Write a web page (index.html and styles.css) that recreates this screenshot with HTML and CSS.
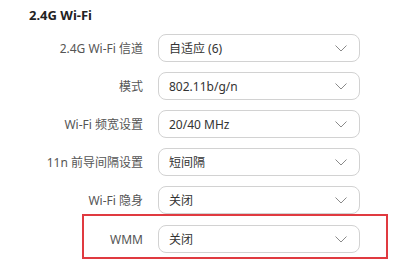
FILE: index.html
```html
<!DOCTYPE html>
<html>
    <head>
        <meta charset="utf-8">
        <title>2.4G Wi-Fi</title>
        <link rel="stylesheet" href="styles.css">
    </head>
    <body>
        <div class="panel">
            <div class="panel-title">2.4G Wi-Fi</div>

            <div class="row">
                <label class="row-label">2.4G Wi-Fi 信道</label>
                <div class="select"><span class="select-value">自适应 (6)</span><svg class="chevron" width="12" height="7" viewBox="0 0 12 7"><polyline points="0.5,0.5 6,6 11.5,0.5"/></svg></div>
            </div>
            <div class="row">
                <label class="row-label">模式</label>
                <div class="select"><span class="select-value">802.11b/g/n</span><svg class="chevron" width="12" height="7" viewBox="0 0 12 7"><polyline points="0.5,0.5 6,6 11.5,0.5"/></svg></div>
            </div>
            <div class="row">
                <label class="row-label">Wi-Fi 频宽设置</label>
                <div class="select"><span class="select-value">20/40 MHz</span><svg class="chevron" width="12" height="7" viewBox="0 0 12 7"><polyline points="0.5,0.5 6,6 11.5,0.5"/></svg></div>
            </div>
            <div class="row">
                <label class="row-label">11n 前导间隔设置</label>
                <div class="select"><span class="select-value">短间隔</span><svg class="chevron" width="12" height="7" viewBox="0 0 12 7"><polyline points="0.5,0.5 6,6 11.5,0.5"/></svg></div>
            </div>
            <div class="row">
                <label class="row-label">Wi-Fi 隐身</label>
                <div class="select"><span class="select-value">关闭</span><svg class="chevron" width="12" height="7" viewBox="0 0 12 7"><polyline points="0.5,0.5 6,6 11.5,0.5"/></svg></div>
            </div>

            <div class="highlight">
                <div class="row row-highlighted">
                    <label class="row-label">WMM</label>
                    <div class="select"><span class="select-value">关闭</span><svg class="chevron" width="12" height="7" viewBox="0 0 12 7"><polyline points="0.5,0.5 6,6 11.5,0.5"/></svg></div>
                </div>
            </div>
        </div>
    </body>
</html>
```

FILE: styles.css
```css
body{
    margin: 0;
    background-color: #fff;
    font-family: "Noto Sans", "Noto Sans CJK SC", sans-serif;
    font-size: 12px;
}

.panel{
    padding-top: 6px;
}

.panel-title{
    padding-left: 29px;
    font-size: 13px;
    font-weight: bold;
    line-height: 18px;
    color: #222;
}

.row{
    display: flex;
    align-items: center;
    padding-top: 10px;
    padding-right: 40px;
}

.row-label{
    flex: 1;
    text-align: right;
    padding-right: 15px;
    color: #555;
    white-space: nowrap;
}

.select{
    box-sizing: border-box;
    width: 202px;
    height: 28px;
    display: flex;
    align-items: center;
    justify-content: space-between;
    padding: 0 12px 0 10px;
    border: 1px solid #d2d2d2;
    border-radius: 8px;
    color: #333;
}

.chevron polyline{
    fill: none;
    stroke: #8a8a8a;
    stroke-width: 1;
}

.highlight{
    margin-left: 82px;
    margin-right: 12px;
    border: 2px solid #e03a40;
    padding-bottom: 4px;
}

.row.row-highlighted{
    padding-top: 9px;
    padding-right: 26px;
}
```
